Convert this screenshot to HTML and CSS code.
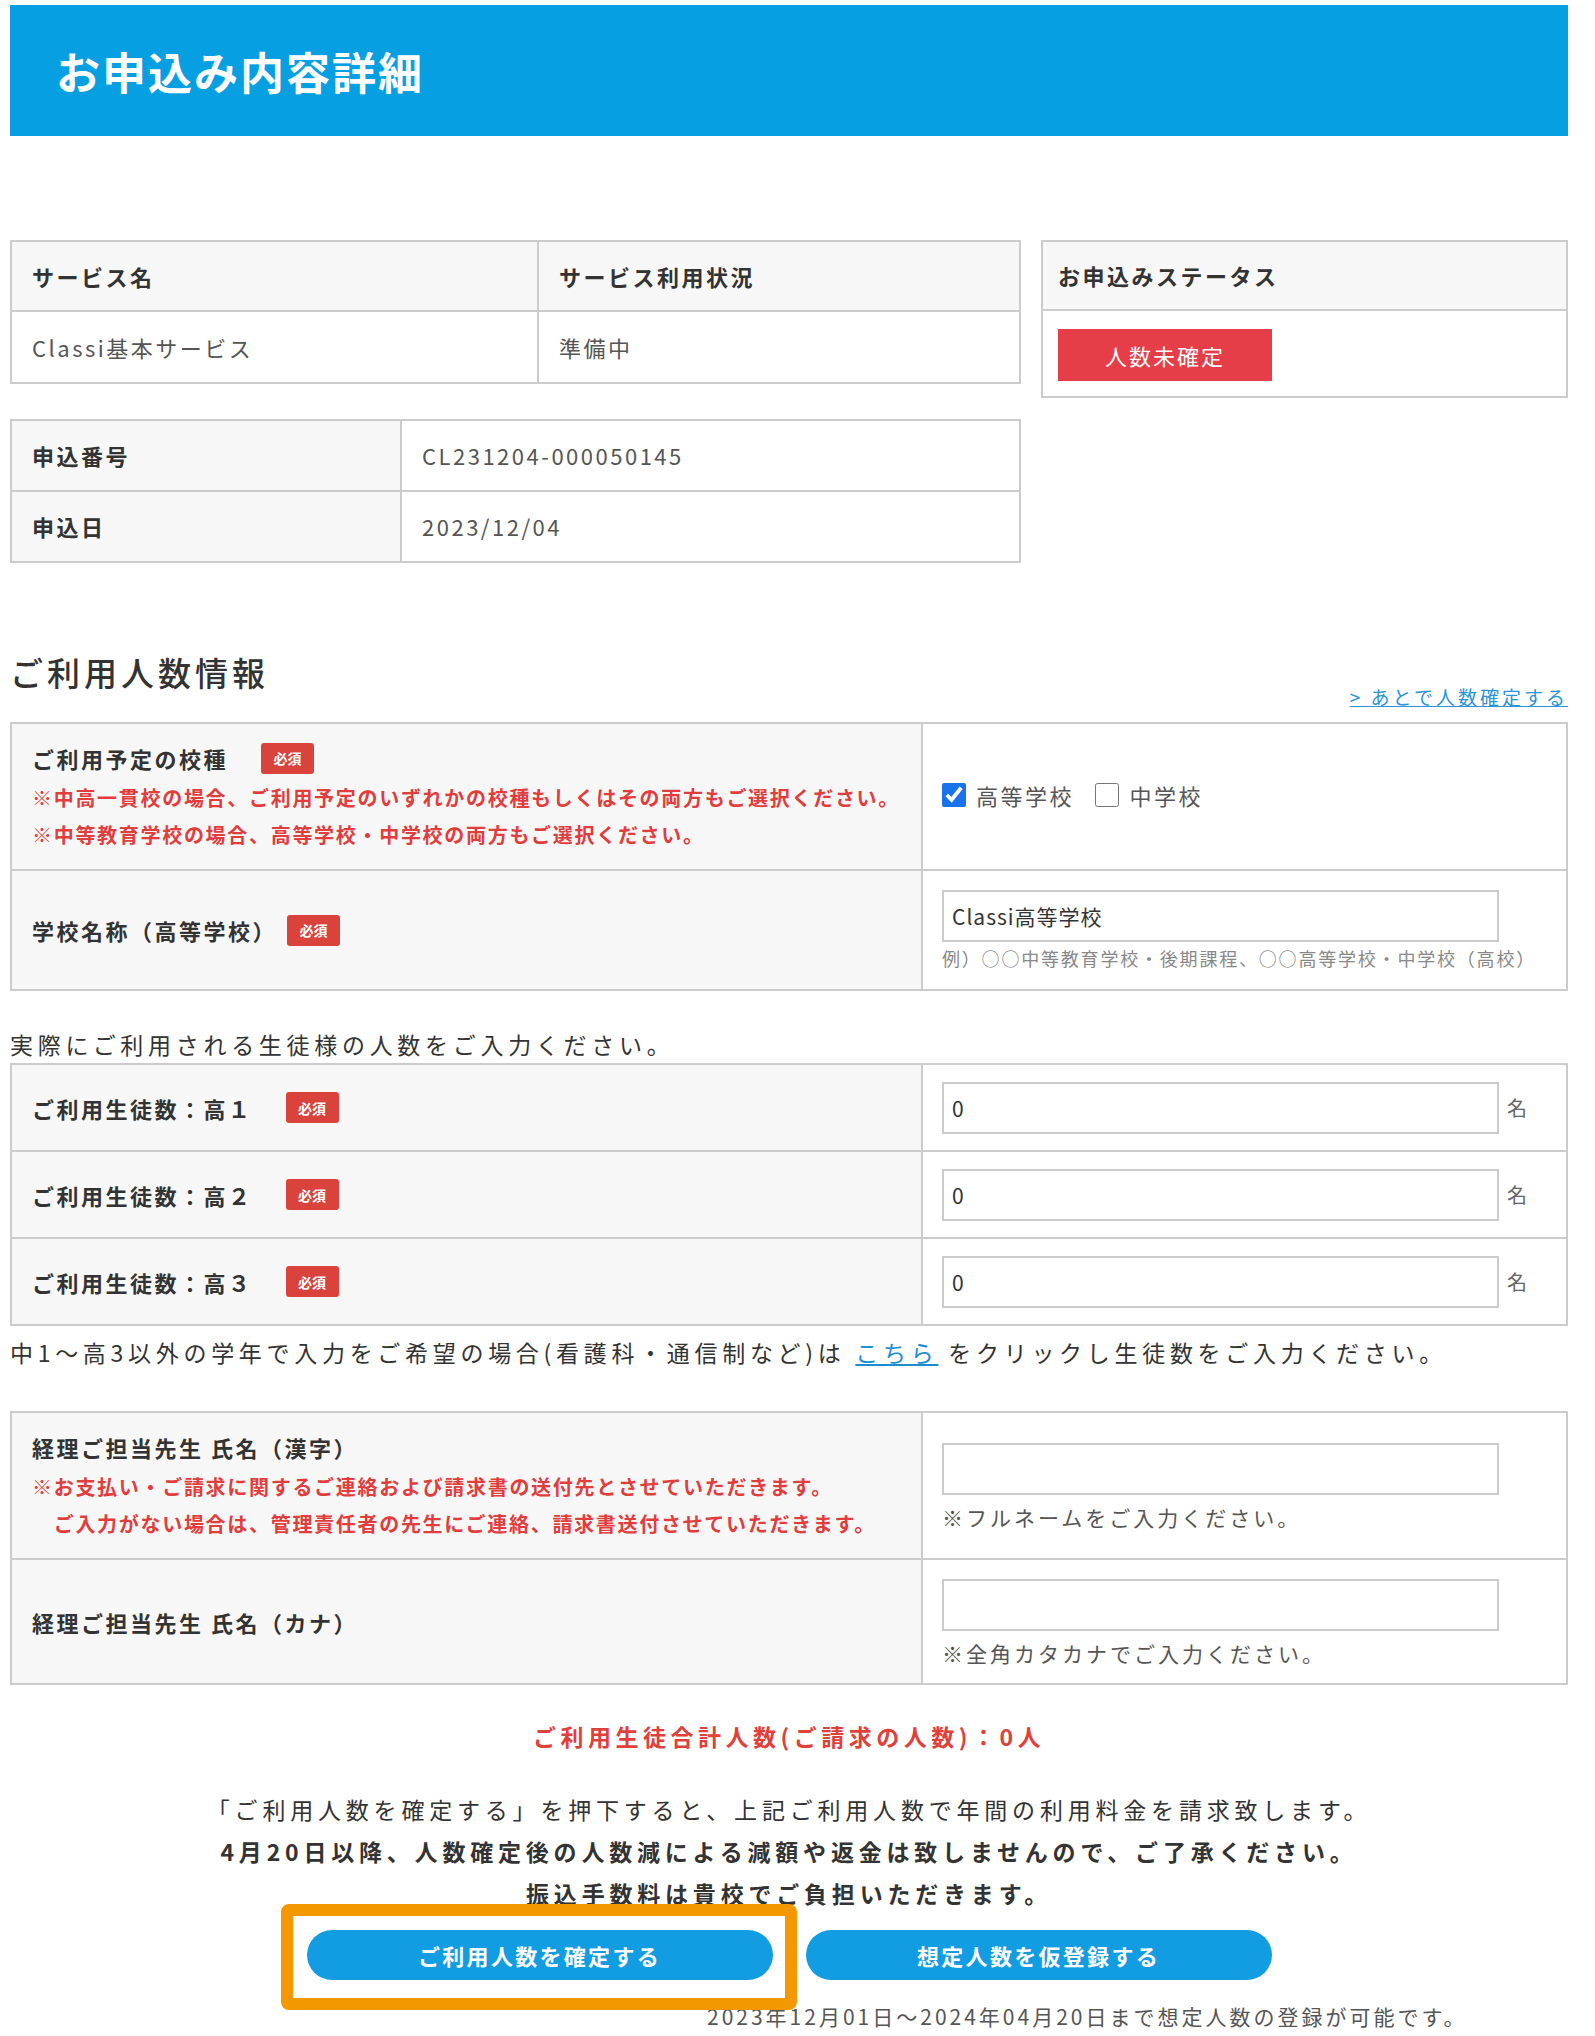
FILE: index.html
```html
<!DOCTYPE html>
<html lang="ja">
<head>
    <meta charset="UTF-8">
    <meta name="viewport" content="width=device-width, initial-scale=1.0">
    <title>お申込み内容詳細</title>
    <link rel="stylesheet" href="styles.css">
</head>
<body>
    <div class="page-header">
        <h1>お申込み内容詳細</h1>
    </div>

    <!-- 申込概要 -->
    <div class="top-grid">
        <div class="top-left">
            <table class="info-table service-table">
                <tr><th>サービス名</th><th>サービス利用状況</th></tr>
                <tr><td>Classi基本サービス</td><td>準備中</td></tr>
            </table>
            <table class="info-table apply-table">
                <tr><th>申込番号</th><td>CL231204-000050145</td></tr>
                <tr><th>申込日</th><td>2023/12/04</td></tr>
            </table>
        </div>
        <div class="status-box">
            <div class="status-head">お申込みステータス</div>
            <div class="status-body"><span class="status-badge">人数未確定</span></div>
        </div>
    </div>

    <!-- ご利用人数情報 -->
    <div class="section-head">
        <h2>ご利用人数情報</h2>
        <a href="#" class="later-link">&gt; あとで人数確定する</a>
    </div>

    <table class="form-table">
        <colgroup><col class="col-label"><col></colgroup>
        <tr class="row-tall">
            <th>
                <div class="label">ご利用予定の校種<span class="req">必須</span></div>
                <p class="caution">※中高一貫校の場合、ご利用予定のいずれかの校種もしくはその両方もご選択ください。<br>※中等教育学校の場合、高等学校・中学校の両方もご選択ください。</p>
            </th>
            <td>
                <label class="check"><input type="checkbox" checked>高等学校</label>
                <label class="check"><input type="checkbox">中学校</label>
            </td>
        </tr>
        <tr class="row-mid">
            <th><div class="label">学校名称（高等学校）<span class="req req-near">必須</span></div></th>
            <td>
                <input type="text" class="text-input" value="Classi高等学校">
                <div class="hint-small">例）○○中等教育学校・後期課程、○○高等学校・中学校（高校）</div>
            </td>
        </tr>
    </table>

    <p class="lead">実際にご利用される生徒様の人数をご入力ください。</p>

    <table class="form-table">
        <colgroup><col class="col-label"><col></colgroup>
        <tr class="row-count">
            <th><div class="label">ご利用生徒数：高１<span class="req">必須</span></div></th>
            <td><div class="count-field"><input type="text" class="text-input" value="0"><span class="unit">名</span></div></td>
        </tr>
        <tr class="row-count">
            <th><div class="label">ご利用生徒数：高２<span class="req">必須</span></div></th>
            <td><div class="count-field"><input type="text" class="text-input" value="0"><span class="unit">名</span></div></td>
        </tr>
        <tr class="row-count">
            <th><div class="label">ご利用生徒数：高３<span class="req">必須</span></div></th>
            <td><div class="count-field"><input type="text" class="text-input" value="0"><span class="unit">名</span></div></td>
        </tr>
    </table>

    <p class="lead lead-after">中1～高3以外の学年で入力をご希望の場合(看護科・通信制など)は <a href="#" class="here">こちら</a> をクリックし生徒数をご入力ください。</p>

    <table class="form-table">
        <colgroup><col class="col-label"><col></colgroup>
        <tr class="row-tall">
            <th>
                <div class="label">経理ご担当先生 氏名（漢字）</div>
                <p class="caution">※お支払い・ご請求に関するご連絡および請求書の送付先とさせていただきます。<br>　ご入力がない場合は、管理責任者の先生にご連絡、請求書送付させていただきます。</p>
            </th>
            <td>
                <input type="text" class="text-input">
                <div class="hint">※フルネームをご入力ください。</div>
            </td>
        </tr>
        <tr class="row-kana">
            <th><div class="label">経理ご担当先生 氏名（カナ）</div></th>
            <td>
                <input type="text" class="text-input">
                <div class="hint">※全角カタカナでご入力ください。</div>
            </td>
        </tr>
    </table>

    <p class="total">ご利用生徒合計人数(ご請求の人数)：0人</p>

    <div class="notice">
        <p>「ご利用人数を確定する」を押下すると、上記ご利用人数で年間の利用料金を請求致します。</p>
        <p class="strong">4月20日以降、人数確定後の人数減による減額や返金は致しませんので、ご了承ください。</p>
        <p class="strong">振込手数料は貴校でご負担いただきます。</p>
    </div>

    <div class="actions">
        <div class="btn-wrap is-marked"><button class="btn">ご利用人数を確定する</button></div>
        <div class="btn-wrap"><button class="btn">想定人数を仮登録する</button></div>
    </div>
    <p class="period">2023年12月01日～2024年04月20日まで想定人数の登録が可能です。</p>
</body>
</html>
```

FILE: styles.css
```css
* {
    box-sizing: border-box;
}

body {
    margin: 0;
    padding: 5px 27px 0 10px;
    font-family: "Noto Sans CJK JP", "Noto Sans", sans-serif;
    font-size: 22px;
    letter-spacing: 2.5px;
    line-height: 1.4;
    color: #333;
    background: #fff;
}

p {
    margin: 0;
}

/* header */
.page-header {
    height: 131px;
    background: #069fe2;
    display: flex;
    align-items: center;
    padding-left: 46px;
}

.page-header h1 {
    margin: 0;
    color: #fff;
    font-size: 44px;
    font-weight: bold;
    letter-spacing: 2px;
    line-height: 1;
}

/* summary tables */
.top-grid {
    display: grid;
    grid-template-columns: 1011px 527px;
    column-gap: 20px;
    align-items: start;
    margin-top: 104px;
}

.top-left {
    display: flex;
    flex-direction: column;
    gap: 35px;
}

.info-table {
    width: 100%;
    border-collapse: collapse;
    table-layout: fixed;
}

.info-table th,
.info-table td {
    border: 2px solid #ccc;
    padding: 0 20px;
    text-align: left;
}

.info-table th {
    background: #f7f7f7;
    font-weight: bold;
}

.info-table td {
    color: #555;
    background: #fff;
}

.service-table th {
    height: 70px;
}

.service-table th:first-child {
    width: 527px;
}

.service-table td {
    height: 72px;
}

.apply-table th {
    width: 390px;
}

.apply-table th,
.apply-table td {
    height: 71px;
}

.status-box {
    border: 2px solid #ccc;
}

.status-head {
    height: 69px;
    display: flex;
    align-items: center;
    padding-left: 15px;
    background: #f7f7f7;
    border-bottom: 2px solid #ccc;
    font-weight: bold;
}

.status-body {
    padding: 18px 15px 15px;
}

.status-badge {
    display: flex;
    align-items: center;
    justify-content: center;
    width: 214px;
    height: 52px;
    background: #e63e48;
    color: #fff;
    font-size: 22px;
    letter-spacing: 2px;
}

/* section */
.section-head {
    display: flex;
    justify-content: space-between;
    align-items: flex-end;
    margin: 87px 0 12px;
}

.section-head h2 {
    margin: 0;
    padding-bottom: 16px;
    font-size: 33px;
    font-weight: 500;
    letter-spacing: 4px;
    line-height: 44px;
}

.later-link {
    font-size: 19px;
    letter-spacing: 3px;
    line-height: 26px;
    color: #2b93d6;
    text-decoration: underline;
}

/* form tables */
.form-table {
    width: 100%;
    border-collapse: collapse;
    table-layout: fixed;
}

.form-table col.col-label {
    width: 911px;
}

.form-table th,
.form-table td {
    border: 2px solid #ccc;
    text-align: left;
    vertical-align: middle;
}

.form-table th {
    background: #f7f7f7;
    padding: 0 20px;
    font-weight: bold;
}

.form-table td {
    background: #fff;
    padding: 0 17px 0 19px;
}

.row-tall th,
.row-tall td {
    height: 147px;
}

.row-mid th,
.row-mid td {
    height: 120px;
}

.row-count th,
.row-count td {
    height: 87px;
}

.row-kana th,
.row-kana td {
    height: 125px;
}

.label {
    display: flex;
    align-items: center;
    line-height: 36px;
}

.req {
    display: inline-flex;
    align-items: center;
    justify-content: center;
    width: 53px;
    height: 31px;
    margin-left: 33px;
    background: #d9433c;
    color: #fff;
    font-size: 14px;
    letter-spacing: 0;
    border-radius: 3px;
}

.req.req-near {
    margin-left: 10px;
}

.caution {
    margin-top: 3px;
    color: #e23d3d;
    font-size: 20px;
    letter-spacing: 1.7px;
    line-height: 37px;
    font-weight: bold;
}

.check {
    display: inline-flex;
    align-items: center;
    gap: 10px;
    margin-right: 14px;
    color: #555;
}

.check input {
    width: 24px;
    height: 24px;
    margin: 0;
    accent-color: #1a73e8;
}

.text-input {
    display: block;
    width: 557px;
    height: 52px;
    padding: 0 8px;
    border: 2px solid #ccc;
    font-family: "Noto Sans CJK JP", "Noto Sans", sans-serif;
    font-size: 21px;
    letter-spacing: 1px;
    color: #333;
    background: #fff;
}

.hint-small {
    margin-top: 4px;
    font-size: 18px;
    letter-spacing: 1.8px;
    line-height: 24px;
    color: #888;
    white-space: nowrap;
}

.hint {
    margin-top: 10px;
    font-size: 21px;
    letter-spacing: 3px;
    line-height: 24px;
    color: #555;
}

.count-field {
    display: flex;
    align-items: center;
    gap: 8px;
}

.unit {
    font-size: 20px;
    color: #666;
}

/* text blocks */
.lead {
    margin: 37px 0 3px;
    font-size: 23px;
    letter-spacing: 4.7px;
    line-height: 32px;
}

.lead.lead-after {
    margin: 10px 0 43px;
}

.here {
    color: #1b8dd0;
    text-decoration: underline;
}

.total {
    margin-top: 35px;
    text-align: center;
    color: #e0403a;
    font-size: 23px;
    letter-spacing: 4.5px;
    line-height: 32px;
    font-weight: bold;
}

.notice {
    margin-top: 36px;
    text-align: center;
    font-size: 23px;
    letter-spacing: 4.8px;
    line-height: 42px;
}

.notice .strong {
    font-weight: bold;
}

/* buttons */
.actions {
    display: flex;
    justify-content: center;
    gap: 33px;
    margin-top: 16px;
}

.btn-wrap {
    position: relative;
}

.btn-wrap.is-marked::after {
    content: "";
    position: absolute;
    left: -26px;
    right: -24px;
    top: -26px;
    bottom: -30px;
    border: 12px solid #f39800;
    border-radius: 8px;
    pointer-events: none;
    z-index: 2;
}

.btn {
    display: flex;
    align-items: center;
    justify-content: center;
    width: 466px;
    height: 50px;
    border: none;
    border-radius: 25px;
    background: #129de2;
    color: #fff;
    font-family: "Noto Sans CJK JP", "Noto Sans", sans-serif;
    font-size: 22px;
    font-weight: bold;
    letter-spacing: 2.3px;
}

.period {
    margin: 22px 0 0 697px;
    font-size: 21px;
    letter-spacing: 3px;
    line-height: 28px;
    color: #555;
    white-space: nowrap;
}
```
